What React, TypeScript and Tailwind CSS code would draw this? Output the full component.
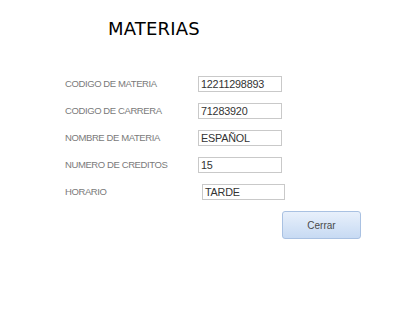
const rows = [
  { label: 'CODIGO DE MATERIA', value: '12211298893' },
  { label: 'CODIGO DE CARRERA', value: '71283920' },
  { label: 'NOMBRE DE MATERIA', value: 'ESPAÑOL' },
  { label: 'NUMERO DE CREDITOS', value: '15' },
];

export default function App() {
  return (
    <div className="w-[400px] h-[322px] bg-white overflow-hidden font-['Liberation_Sans',Arial,sans-serif]">
      {/* Title */}
      <h1 className="pl-[108px] pt-[18px] text-[18px] leading-[22px] text-black tracking-[0.2px] font-['Comic_Sans_MS','DejaVu_Sans',sans-serif]">
        MATERIAS
      </h1>

      {/* Form */}
      <div className="mt-[36px] pl-[65px] flex flex-col gap-[11px]">
        {rows.map(r => (
          <div key={r.label} className="flex items-center h-[16px]">
            <div className="w-[133px] text-[9.5px] tracking-[-0.4px] text-[#7a7a7a]">{r.label}</div>
            <div className="w-[84px] h-[16px] border border-[#c9c9c9] pl-[2px] flex items-center text-[10.8px] tracking-[-0.2px] text-[#333]">
              {r.value}
            </div>
          </div>
        ))}
        <div className="flex items-center h-[16px]">
          <div className="w-[137px] text-[9.5px] tracking-[-0.4px] text-[#7a7a7a]">HORARIO</div>
          <div className="w-[83px] h-[16px] border border-[#c9c9c9] pl-[2px] flex items-center text-[10.8px] tracking-[-0.2px] text-[#333]">
            TARDE
          </div>
        </div>
      </div>

      {/* Button */}
      <div className="ml-[282px] mt-[11px]">
        <button className="w-[79px] h-[28px] rounded-[3px] border border-[#a9c1e2] bg-gradient-to-b from-[#e8f0fb] to-[#c7daf3] text-[10px] text-[#4a4a4a]">
          Cerrar
        </button>
      </div>
    </div>
  );
}
